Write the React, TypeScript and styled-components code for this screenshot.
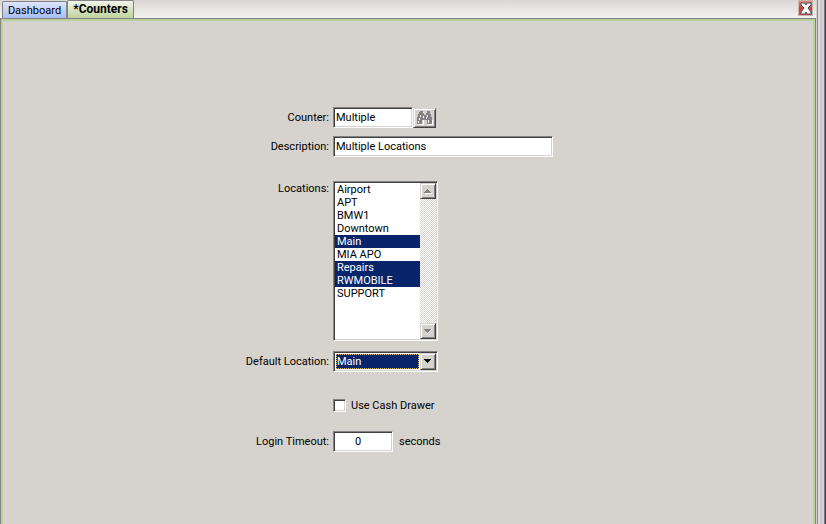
import React, { useState } from "react";
import styled, { createGlobalStyle, css } from "styled-components";

const face = "#d6d3ce";
const navy = "#08246b";

const GlobalStyle = createGlobalStyle`
  *, *::before, *::after { box-sizing: border-box; }
  html, body, #root { height: 100%; margin: 0; }
  body { background: ${face}; overflow: hidden; }
  body, input, select, button {
    font-family: "Roboto", "Liberation Sans", Arial, sans-serif;
    font-size: 11px;
    line-height: 13px;
    color: #000;
  }
`;

const sunken = css`
  border: 1px solid;
  border-color: #848284 #fff #fff #848284;
  box-shadow: inset 1px 1px 0 #424142, inset -1px -1px 0 ${face};
`;

const raised = css`
  background: ${face};
  border: 1px solid;
  border-color: ${face} #424142 #424142 ${face};
  box-shadow: inset 1px 1px 0 #fff, inset -1px -1px 0 #848284;
`;

const Shell = styled.div`
  display: flex;
  min-height: 100vh;
`;

const Workspace = styled.div`
  flex: 1;
  display: flex;
  flex-direction: column;
`;

const Gutter = styled.div`
  width: 10px;
  background: linear-gradient(90deg, ${face} 0 1px, #848284 1px 2px, #dedbdf 2px 4px, #c9c7ce 4px 6px, #d6d3d6 6px 8px, #77757a 8px 9px, #424142 9px);
`;

const TabBar = styled.header`
  display: flex;
  align-items: flex-end;
  height: 19px;
  padding-left: 2px;
  border-bottom: 1px solid #848284;
  background: linear-gradient(#dad7d3, #f4f2f0);
`;

const TabList = styled.nav`
  display: flex;
  align-items: flex-end;
  flex: 1;
`;

const Tab = styled.button<{ $active?: boolean }>`
  height: ${(p) => (p.$active ? 18 : 17)}px;
  width: ${(p) => (p.$active ? 67 : 65)}px;
  padding: 0;
  white-space: nowrap;
  border: 1px solid #848284;
  border-bottom: 0;
  border-radius: 2px 2px 0 0;
  font-size: ${(p) => (p.$active ? 12 : 11)}px;
  font-weight: ${(p) => (p.$active ? 700 : 400)};
  background: ${(p) =>
    p.$active
      ? "linear-gradient(#f2f5ea, #bdd39c)"
      : "linear-gradient(#dde6fb, #a5bef5)"};
`;

const CloseButton = styled.button`
  align-self: flex-start;
  width: 15px;
  height: 16px;
  margin-right: 3px;
  padding: 0;
  border: 1px solid #c6b5ad;
  background: linear-gradient(#dc8f80, #c8432f 50%, #d8503a);
  svg { display: block; }
`;

const Panel = styled.main`
  flex: 1;
  padding: 86px 20px 20px 330px;
  border: 2px solid #b9d098;
  border-bottom: 0;
  box-shadow: -1px 0 0 #848284, 1px 0 0 #848284;
  margin: 0 1px;
`;

const Row = styled.div<{ $gap: number; $top?: boolean }>`
  display: flex;
  align-items: ${(p) => (p.$top ? "flex-start" : "center")};
  margin-bottom: ${(p) => p.$gap}px;
`;

const Label = styled.label<{ $top?: boolean }>`
  width: 120px;
  margin-left: -120px;
  padding-right: 4px;
  padding-top: ${(p) => (p.$top ? 1 : 0)}px;
  text-align: right;
  white-space: nowrap;
`;

const TextBox = styled.input<{ $width: number; $center?: boolean }>`
  ${sunken}
  width: ${(p) => p.$width}px;
  height: 21px;
  padding: 0 2px 1px;
  padding-right: ${(p) => (p.$center ? 12 : 2)}px;
  border-radius: 0;
  background: #fff;
  outline: 0;
  text-align: ${(p) => (p.$center ? "center" : "left")};
`;

const FindButton = styled.button`
  ${raised}
  width: 23px;
  height: 20px;
  padding: 0 0 0 3px;
  svg { display: block; }
`;

const ListFrame = styled.div`
  ${sunken}
  display: flex;
  width: 105px;
  height: 160px;
  padding: 1px;
  background: #fff;
`;

const LocationList = styled.select`
  flex: 1;
  min-width: 0;
  height: 100%;
  padding: 0;
  border: 0;
  border-radius: 0;
  outline: 0;
  background: #fff;
  overflow: hidden;
  option {
    min-height: 13px;
    height: 13px;
    padding: 0 2px;
    line-height: 13px;
  }
  option:checked {
    background: linear-gradient(${navy}, ${navy});
    -webkit-text-fill-color: #fff;
  }
`;

const ScrollTrack = styled.div`
  display: flex;
  flex-direction: column;
  justify-content: space-between;
  width: 16px;
  background: repeating-conic-gradient(#fff 0 25%, ${face} 0 50%) 0 0 / 2px 2px;
`;

const ArrowButton = styled.button`
  ${raised}
  display: grid;
  place-items: center;
  width: 16px;
  height: 16px;
  padding: 0;
`;

const ComboFrame = styled.div`
  ${sunken}
  position: relative;
  width: 105px;
  height: 21px;
  padding: 2px;
  background: #fff;
`;

const Combo = styled.select`
  appearance: none;
  display: block;
  width: 83px;
  height: 15px;
  padding: 0;
  border: 1px dotted #e7c36b;
  border-radius: 0;
  outline: 0;
  background: ${navy};
  color: #fff;
`;

const ComboArrow = styled.span`
  ${raised}
  position: absolute;
  top: 1px;
  right: 1px;
  bottom: 1px;
  width: 16px;
  display: grid;
  place-items: center;
  pointer-events: none;
`;

const CheckBox = styled.input`
  ${sunken}
  appearance: none;
  width: 13px;
  height: 13px;
  margin: 0 5px 0 0;
  background: #fff;
  &:checked { background: radial-gradient(#000 3px, #fff 4px); }
`;

const Suffix = styled.span`
  margin-left: 6px;
`;

const Triangle = ({ up, color }: { up?: boolean; color: string }) => (
  <svg width="8" height="5" viewBox="0 0 8 5" shapeRendering="crispEdges" aria-hidden="true">
    {color !== "#000" && (
      <path d={up ? "M1 4h7v1H1z" : "M8 0v1h-1v1h-1v1h-1v1h-1v1h-1v-1h1v-1h1v-1h1v-1h1v-1z"} fill="#fff" />
    )}
    <path d={up ? "M0 4h7v-1h-1v-1h-1v-1h-1v-1h-1v1h-1v1h-1v1h-1z" : "M0 0h7v1h-1v1h-1v1h-1v1h-1v-1h-1v-1h-1v-1h-1z"} fill={color} />
  </svg>
);

const Binoculars = () => (
  <svg width="16" height="14" viewBox="0 0 16 14" shapeRendering="crispEdges" aria-hidden="true">
    <path fill="#fff" d="M6 1h1v3H6zM12 1h1v3h1v4h1v1h1v5h-5v-1h4zM1 13h5v-4h1v5H1z" />
    <path fill="#848284" d="M3 0h3v2h1v2h2v-2h1v-2h3v3h1v3h1v7h-5v-4h-5v4h-5v-7h1v-3h1z" />
    <path fill="#fff" d="M3 4h1v2H3zM2 7h1v2H2zM1 10h1v2H1zM10 4h1v2h-1zM9 6h1v2H9zM11 9h1v3h-1zM6 5h1v2H6z" />
  </svg>
);

const locations = ["Airport", "APT", "BMW1", "Downtown", "Main", "MIA APO", "Repairs", "RWMOBILE", "SUPPORT"];

export default function App() {
  const [selected, setSelected] = useState(["Main", "Repairs", "RWMOBILE"]);

  return (
    <Shell>
      <GlobalStyle />
      <Workspace>
        <TabBar>
          <TabList>
            <Tab type="button">Dashboard</Tab>
            <Tab type="button" $active>*Counters</Tab>
          </TabList>
          <CloseButton type="button" aria-label="Close">
            <svg width="13" height="14" viewBox="0 0 13 14" aria-hidden="true">
              <path d="M2 2h4l1 2 1-2h4v2L9 7l3 4v2H8l-1-2-1 2H2v-2l3-4-3-3z" fill="#fff" stroke="#4a5068" />
            </svg>
          </CloseButton>
        </TabBar>
        <Panel>
          <Row $gap={8}>
            <Label htmlFor="counter">Counter:</Label>
            <TextBox id="counter" $width={80} defaultValue="Multiple" />
            <FindButton type="button" aria-label="Find counter"><Binoculars /></FindButton>
          </Row>
          <Row $gap={24}>
            <Label htmlFor="description">Description:</Label>
            <TextBox id="description" $width={220} defaultValue="Multiple Locations" />
          </Row>
          <Row $gap={10} $top>
            <Label htmlFor="locations" $top>Locations:</Label>
            <ListFrame>
              <LocationList
                id="locations"
                multiple
                size={9}
                value={selected}
                onChange={(e) => setSelected(Array.from(e.target.selectedOptions, (o) => o.value))}
              >
                {locations.map((name) => <option key={name}>{name}</option>)}
              </LocationList>
              <ScrollTrack>
                <ArrowButton type="button" aria-label="Scroll up"><Triangle up color="#848284" /></ArrowButton>
                <ArrowButton type="button" aria-label="Scroll down"><Triangle color="#848284" /></ArrowButton>
              </ScrollTrack>
            </ListFrame>
          </Row>
          <Row $gap={27}>
            <Label htmlFor="default-location">Default Location:</Label>
            <ComboFrame>
              <Combo id="default-location" defaultValue="Main">
                {locations.map((name) => <option key={name}>{name}</option>)}
              </Combo>
              <ComboArrow><Triangle color="#000" /></ComboArrow>
            </ComboFrame>
          </Row>
          <Row $gap={19}>
            <CheckBox id="cash-drawer" type="checkbox" />
            <label htmlFor="cash-drawer">Use Cash Drawer</label>
          </Row>
          <Row $gap={0}>
            <Label htmlFor="timeout">Login Timeout:</Label>
            <TextBox id="timeout" $width={60} $center defaultValue="0" />
            <Suffix>seconds</Suffix>
          </Row>
        </Panel>
      </Workspace>
      <Gutter />
    </Shell>
  );
}
